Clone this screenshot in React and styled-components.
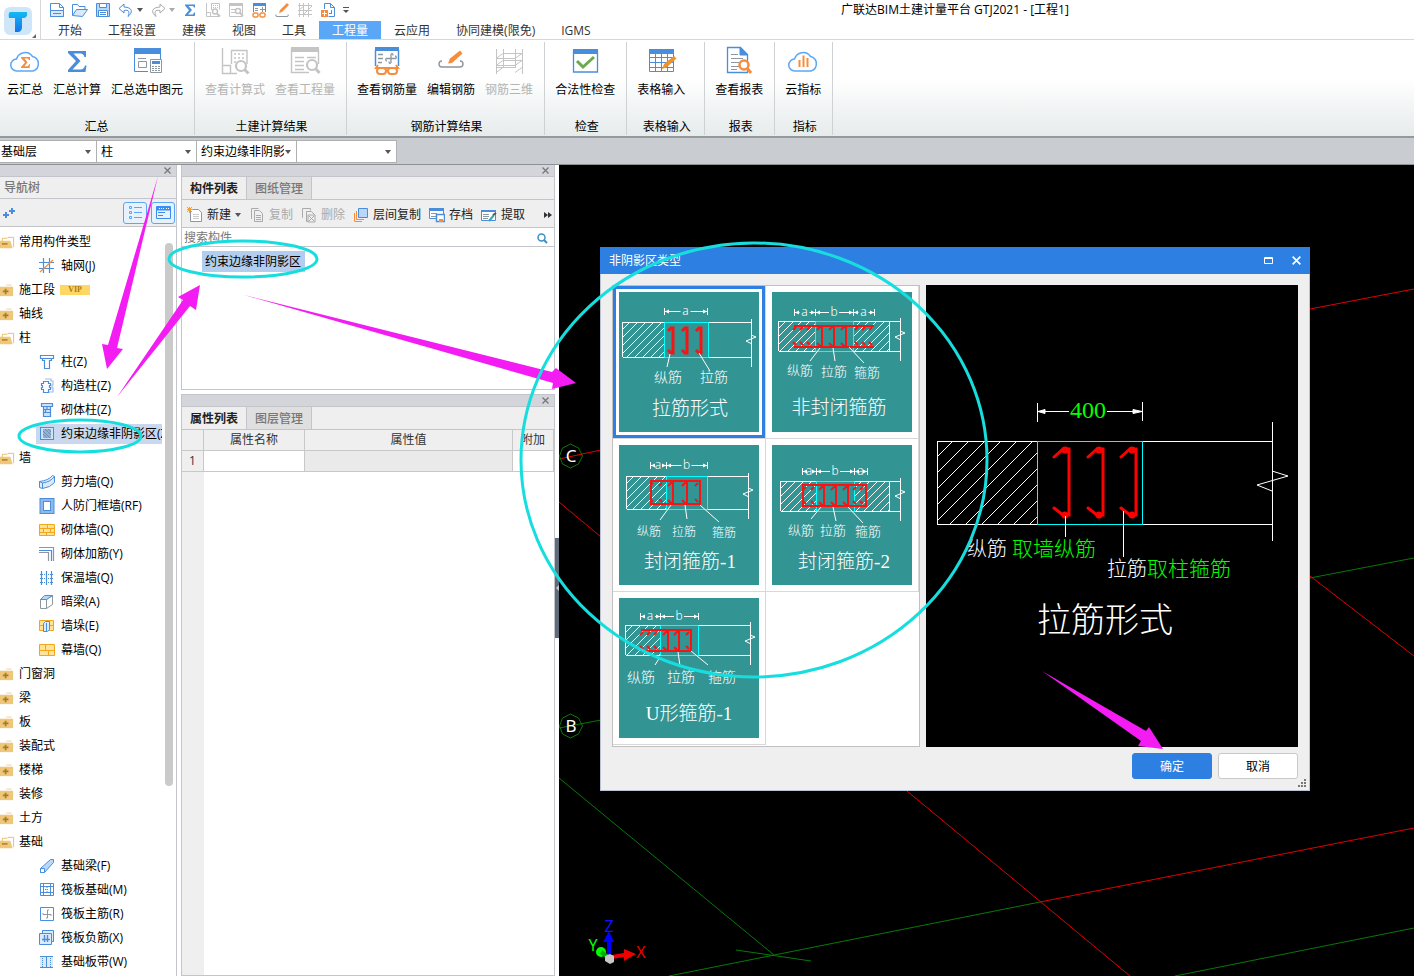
import { useState } from 'react';
import styled, { createGlobalStyle } from 'styled-components';

const GlobalStyle = createGlobalStyle`
  * {
    box-sizing: border-box;
  }
  body {
    margin: 0;
    font-family: "Open Sans", "Noto Sans CJK SC", sans-serif;
    font-size: 12px;
    line-height: 16px;
    color: #000;
    background: #fff;
  }
  button, input, select {
    font: inherit;
    color: inherit;
    margin: 0;
    padding: 0;
    border: none;
    background: none;
  }
  svg {
    display: block;
    flex: none;
  }
`

const Page = styled.div`
  position: relative;
  display: flex;
  flex-direction: column;
  height: 100vh;
  overflow: hidden;
`

/* header */
const Header = styled.header`
  display: flex;
  height: 40px;
  border-bottom: 1px solid #d5d8db;
`
const Logo = styled.button`
  display: flex;
  align-items: flex-end;
  width: 41px;
  border-right: 1px solid #d5d8db;
`
const HeaderMain = styled.div`
  flex: 1;
  display: flex;
  flex-direction: column;
`
const QuickBar = styled.div`
  display: flex;
  align-items: center;
  gap: 7px;
  height: 20px;
  padding-left: 8px;
`
const QuickButton = styled.button`
  display: flex;
  align-items: center;
  gap: 3px;
`
const Title = styled.h1`
  flex: 1;
  margin: 0;
  padding-left: 140px;
  font-size: 12px;
  font-weight: 400;
  text-align: center;
`
const Tabs = styled.nav`
  display: flex;
  margin-top: 1px;
  padding-left: 4px;
`
const Tab = styled.a`
  padding: 2px 13px 0;
  height: 18px;
  color: ${(p) => (p.$active ? '#fff' : '#333')};
  background: ${(p) => (p.$active ? '#5aa7f8' : 'transparent')};
  text-decoration: none;
  white-space: nowrap;
`

/* ribbon */
const Ribbon = styled.div`
  display: flex;
  height: 98px;
  padding: 2px 0 1px;
  background: linear-gradient(#fff 40%, #e6ebeb);
  border-bottom: 2px solid #96999c;
`
const Group = styled.section`
  display: flex;
  flex-direction: column;
  justify-content: space-between;
  min-width: ${(p) => p.$min || 0}px;
  padding: 4px 11px 0 ${(p) => (p.$first ? 7 : 10)}px;
  border-right: 1px solid #cfd2d4;
`
const GroupItems = styled.div`
  display: flex;
  gap: 10px;
`
const GroupLabel = styled.div`
  padding-left: 3px;
  text-align: center;
`
const Tool = styled.button`
  display: flex;
  flex-direction: column;
  align-items: center;
  gap: 4px;
  white-space: nowrap;
  color: ${(p) => (p.disabled ? '#b4b4b4' : '#000')};
`

/* combo bar */
const ComboBar = styled.div`
  display: flex;
  height: 27px;
  padding: 2px 0;
  background: #c9ccd1;
  border-bottom: 1px solid #8e9196;
`
const Combo = styled.label`
  position: relative;
  width: ${(p) => p.$width}px;
  height: 23px;
  background: #fff;
  border: solid #b0b0b0;
  border-width: 1px 1px 1px 0;
`
const ComboSelect = styled.select`
  appearance: none;
  width: 100%;
  height: 100%;
  padding: 0 12px 0 ${(p) => (p.$first ? 1 : 4)}px;
  outline: none;
`
const ComboCaret = styled.span`
  position: absolute;
  right: 5px;
  top: 9px;
  pointer-events: none;
`

const Workspace = styled.div`
  flex: 1;
  display: flex;
  min-height: 0;
`

/* docked panels */
const Strip = styled.div`
  display: flex;
  justify-content: flex-end;
  align-items: center;
  height: 12px;
  padding-right: 5px;
  background: #d3d5db;
  border-bottom: 1px solid #c3c5cb;
`
const NavPanel = styled.aside`
  display: flex;
  flex-direction: column;
  width: 177px;
  border-right: 1px solid #c3c5cb;
`
const PanelTitle = styled.h2`
  margin: 0;
  padding: 3px 4px 0;
  height: 22px;
  font-size: 12px;
  font-weight: 500;
  color: #777;
  background: #efefef;
  border-bottom: 1px solid #c3c5cb;
`
const NavTools = styled.div`
  display: flex;
  align-items: center;
  height: 28px;
  padding: 0 1px 0 3px;
  background: #efefef;
  border-bottom: 1px solid #c3c5cb;
`
const Spacer = styled.div`
  flex: 1;
`
const ViewButton = styled.button`
  display: flex;
  align-items: center;
  justify-content: center;
  width: 24px;
  height: 22px;
  margin-left: 4px;
  border: 1px solid #5aa7f8;
  border-radius: 3px;
  background: #e8f2fd;
`
const NavBody = styled.div`
  flex: 1;
  display: flex;
  min-height: 0;
`
const Tree = styled.ul`
  flex: 1;
  min-width: 0;
  margin: 0;
  padding: 3px 0 0;
  list-style: none;
  overflow: hidden;
`
const TreeRow = styled.li`
  display: flex;
  align-items: center;
  gap: ${(p) => (p.$leaf ? 6 : 4)}px;
  height: 20px;
  margin: 2px 0 4px ${(p) => (p.$leaf ? 36 : 0)}px;
  padding-left: ${(p) => (p.$leaf ? 3 : 0)}px;
  background: ${(p) => (p.$selected ? '#c9d8ee' : 'transparent')};
  white-space: nowrap;
  overflow: hidden;
`
const Vip = styled.span`
  width: 30px;
  height: 10px;
  margin-left: 1px;
  background: #ffd765;
  color: #b07a10;
  font: bold 8px/10px "Liberation Serif", serif;
  text-align: center;
`
const Rail = styled.div`
  display: flex;
  flex-direction: column;
  width: 14px;
  padding: 16px 3px 0;

  &::before {
    content: '';
    flex: 543;
    border-radius: 4px;
    background: #cacaca;
  }
  &::after {
    content: '';
    flex: 190;
  }
`
const MidColumn = styled.div`
  display: flex;
  flex-direction: column;
  gap: 4px;
  width: 382px;
  padding: 0 4px;
`
const Panel = styled.section`
  display: flex;
  flex-direction: column;
  flex: ${(p) => (p.$grow ? '1' : 'none')};
  min-height: ${(p) => (p.$grow ? 0 : 225)}px;
  border: 1px solid #c3c5cb;
  border-top-width: ${(p) => (p.$grow ? 1 : 0)}px;
`
const PanelTabs = styled.div`
  display: flex;
  height: 23px;
  background: #efefef;
  border-bottom: 1px solid #c3c5cb;
`
const PanelTab = styled.button`
  width: 65px;
  padding-top: 2px;
  border-right: 1px solid #c3c5cb;
  background: ${(p) => (p.$active ? '#efefef' : '#dfdfdf')};
  color: ${(p) => (p.$active ? '#222' : '#777')};
  font-weight: ${(p) => (p.$active ? 600 : 500)};
`
const ListTools = styled.div`
  display: flex;
  align-items: center;
  gap: 8px;
  height: 28px;
  padding: 2px 2px 0 5px;
  background: #efefef;
  border-bottom: 1px solid #c3c5cb;
`
const ListTool = styled.button`
  display: flex;
  align-items: center;
  gap: 4px;
  white-space: nowrap;
  color: ${(p) => (p.disabled ? '#aaa' : '#222')};
`
const Search = styled.label`
  display: flex;
  align-items: center;
  height: 19px;
  padding: 2px 6px 0 2px;
  border-bottom: 1px solid #c3c5cb;
`
const SearchInput = styled.input`
  flex: 1;
  outline: none;

  &::placeholder {
    color: #777;
    opacity: 1;
  }
`
const ListItem = styled.button`
  align-self: flex-start;
  height: 21px;
  margin: 4px 0 0 20px;
  padding: 0 4px 0 3px;
  background: #b3cdee;
`
const PropTable = styled.table`
  width: 100%;
  border-collapse: separate;
  border-spacing: 0;
  table-layout: fixed;
  color: #333;

  th, td {
    height: 21px;
    padding: 0;
    border: solid #c8c8c8;
    border-width: 0 1px 1px 0;
    font-weight: 400;
    text-align: center;
  }
  th {
    background: #efefef;
  }
`
const ValueCell = styled.td`
  background: #eaeaea;
`
const TableRest = styled.div`
  flex: 1;
  background: linear-gradient(90deg, #efefef 22px, #fff 22px);
`

/* model view */
const Viewport = styled.main`
  position: relative;
  flex: 1;
  background: #000;
  overflow: hidden;
`
const Splitter = styled.span`
  position: absolute;
  left: 555px;
  top: 538px;
  display: flex;
  align-items: center;
  justify-content: flex-end;
  width: 4px;
  height: 100px;
  background: #5f6b78;
`

/* dialog */
const Dialog = styled.div`
  position: absolute;
  left: 41px;
  top: 82px;
  width: 710px;
  background: #efefef;
  border: 1px solid #b9c3d3;
  border-top: none;
`
const DialogBar = styled.div`
  display: flex;
  align-items: center;
  height: 27px;
  margin: 0 -1px;
  padding: 0 9px;
  background: #2d80e2;
  color: #fff;
`
const WinButton = styled.button`
  margin-left: 19px;
`
const DialogBody = styled.div`
  display: flex;
  gap: 6px;
  padding: 11px 11px 0;
`
const Choices = styled.div`
  display: grid;
  grid-template-columns: repeat(2, 153px);
  grid-template-rows: repeat(3, 153px);
  border: 1px solid #c0c0c0;
  background: #fff;
`
const Choice = styled.button`
  display: flex;
  align-items: center;
  justify-content: center;
  border: solid #d8d8d8;
  border-width: 0 1px 1px 0;
  box-shadow: ${(p) => (p.$selected ? 'inset 0 0 0 3px #2d80e2' : 'none')};
`
const Preview = styled.div`
  flex: 1;
  background: #000;
`
const DialogFoot = styled.div`
  display: flex;
  justify-content: flex-end;
  gap: 6px;
  height: 43px;
  padding: 6px 11px 0;
`
const FootButton = styled.button`
  width: 80px;
  height: 26px;
  padding-top: 2px;
  border: 1px solid ${(p) => (p.$primary ? '#2d80e2' : '#c9c9c9')};
  border-radius: 3px;
  background: ${(p) => (p.$primary ? '#2d80e2' : '#fff')};
  color: ${(p) => (p.$primary ? '#fff' : '#000')};
`
const Grip = styled.span`
  position: absolute;
  right: 3px;
  bottom: 3px;
`
const Marks = styled.svg`
  position: absolute;
  left: 0;
  top: 0;
  pointer-events: none;
`
const DrawText = styled.text`
  font-family: ${(p) => (p.$sans ? '"Noto Sans"' : '"Liberation Serif"')}, "Noto Sans CJK SC", serif;
  font-size: ${(p) => p.$size}px;
  font-weight: 300;
  fill: ${(p) => p.$color || '#fff'};
  stroke: none;
  text-anchor: ${(p) => p.$anchor || 'middle'};
`

const B = '#4a8edb'
const O = '#f58d3d'
const G = '#8c979f'
const L = '#c4c4c4'

const Caret = ({ color = '#555' }) => (
  <svg width="6" height="4"><path d="M0 0h6L3 4z" fill={color} /></svg>
)
const Close = ({ color = '#777', size = 7 }) => (
  <svg width={size} height={size} viewBox="0 0 7 7" stroke={color} strokeWidth="1.300"><path d="M.5.5l6 6M6.5.5l-6 6" /></svg>
)

/* 16px icons */
const small = {
  new: <g stroke={B}><path d="M1.500 1.500h9l4 4v9h-13z" fill="#fff" /><path d="M10.500 1.500v4h4" fill="none" /><path d="M1.500 8.500h13v6h-13z" fill="#d9e9fb" /><path d="M4 11.500h8" /></g>,
  open: <g stroke={B} fill="#fff"><path d="M.5 13.500v-11h5l1.500 2h6v3" /><path d="M.5 13.500l4-6h11l-5 7z" fill="#d9e9fb" /></g>,
  save: <g stroke={B} fill="#b9d7fa"><path d="M1.500 1.500h13v13h-13z" /><path d="M4.500 1.500h7v4h-7zM3.500 8.500h9v6h-9z" fill="#fff" /><path d="M5 10.500h6M5 12.500h6" /></g>,
  undo: <path d="M6 2L1 6.500 6 11V8.500c5-1 6 1 4 6 5-4 5-9-4-9.500z" fill="#fff" stroke={B} />,
  redo: <path d="M10 2l5 4.500L10 11V8.500c-5-1-6 1-4 6-5-4-5-9 4-9.500z" fill="#fff" stroke="#aaa" />,
  sum: <path d="M3 2.500h10v3h-1L11 4H6.500L10 8l-4 4.500h5l1-2h1.200l-.4 3.500H3v-1L7 8.300 3 3.500z" fill={B} />,
  calc: <g stroke={L} fill="none"><path d="M1.500 1v13.500h13M1.500 10.500h4v4" /><path d="M6.500 8V1.500h8v6" /><path d="M8 3.500h5M8 5.500h5" strokeDasharray="1 1" /><circle cx="10" cy="9.500" r="2.500" strokeWidth="1.500" /><path d="M12 11.500l3 3" strokeWidth="2" /></g>,
  qty: <g stroke={L} fill="none"><path d="M1.500 2v12.500h13V2z" /><path d="M1 2.500h14" strokeWidth="3" /><path d="M3 7.500h4M3 10.500h4" /><circle cx="10" cy="9" r="2.500" strokeWidth="1.500" /><path d="M12 11l3 3" strokeWidth="2" /></g>,
  rebar: <g stroke={B} fill="none"><path d="M2.500 10V2.500h12V10" /><path d="M2 2.500h13" strokeWidth="3" /><path d="M4 6.500h3M4 8.500h3M9 7.500h5M11.500 5v5" stroke={G} /><g stroke={O} strokeWidth="1.500"><rect x="2" y="11" width="5" height="4" rx="1.500" /><rect x="9" y="11" width="5" height="4" rx="1.500" /></g></g>,
  edit: <g fill="none"><path d="M2 12.500q-1 2 1 2h10q2 0 1-2" stroke={G} /><path d="M5 11l1-3 7-7 2 2-7 7z" fill={O} /></g>,
  grid3: <path d="M2.500 1v14M6.500 1v14M11.500 1v14M1 3.500h14M1 8.500h14M1 12.500h14M2 8l5-4M7 12l8-8" stroke={L} fill="none" />,
  addpage: <g fill="none" stroke={B}><path d="M4.500 7V1.500h6l4 4v9h-6M10.500 1.500v4h4" /><rect x="1" y="8" width="7" height="7" fill={O} stroke="none" /><path d="M4.500 9v5M2 11.500h5" stroke="#fff" /><path d="M9 11.500h3M11.500 8v3" /></g>,
  axis: <g fill="none" stroke={B} strokeWidth="1.200"><path d="M4.500 0v15M10.500 0v15M0 4.500h15M0 10.500h15" /><path d="M1 14L14 2" stroke={O} /></g>,
  column: <g fill="#fff" stroke={B} strokeWidth="1.200"><path d="M1.500 1.500h13v3h-2v2h-2v8h-5v-8h-2v-2h-2z" /><path d="M4 4.500h8" /></g>,
  structcol: <g fill="#fff" stroke={B} strokeWidth="1.200"><path d="M6 1h6v2h2v4h-1v3h1v4H7" stroke="#9dc1ee" /><path d="M4.500 3.500h5v2h2v2h-1v2h1v2h-2v3h-5v-3h-2v-2h1v-2h-1v-2h2z" /></g>,
  brickcol: <g fill="#cfe1f8" stroke={B} strokeWidth="1.200"><path d="M2.500 1.500h11v3h-2v10h-7v-10h-2z" /><path d="M3 4.500h10M5 7.500h6M5 10.500h6M8 5v3M6.500 8v3" /></g>,
  edge: <g stroke={B}><rect x="1.500" y="1.500" width="13" height="12" fill="#cfe1f8" /><path d="M4 3h8v9H4z" fill="#8fb2d8" stroke="none" /><path d="M4 5l7 7M4 8l4 4M6 3l6 6M9 3l3 3" stroke="#708da8" /></g>,
  shear: <g fill="#dcebfb" stroke={B}><path d="M.5 7.500q9-1 13-6l2 1v6q-4 5-12 6l-3-1z" /><path d="M.5 7.500l3 1.500q8-1 12-6.500M3.500 9v5.500" fill="none" /></g>,
  door: <g fill="none" stroke={B}><rect x="1" y=".5" width="14" height="15" fill="#8db9f1" /><rect x="4.500" y="3.500" width="7" height="9" fill="#fff" /></g>,
  brick: <g stroke="#f2a71b" fill="#ffe39a"><path d="M.5 2.500h15v11H.5z" /><path d="M.5 6.500h15M.5 10.500h15M8.500 3v3M4.500 7v3M11.500 7v3M7.500 11v3" /></g>,
  brickbar: <g fill="none" stroke={G} strokeWidth="1.200"><path d="M0 1.500h14.500V15M0 6.500h9.500V15" /><path d="M0 4.500h12.500V15" stroke={B} /></g>,
  insul: <g fill="none" stroke={B} strokeWidth="1.200"><path d="M2.500 1v14M7.500 1v14M12.500 1v14" /><path d="M1 4.500h13M1 8.500h13M1 12.500h13" strokeDasharray="1 1" /></g>,
  beam: <g fill="#fff" stroke={G}><path d="M1.500 5.500h6v9h-6z" /><path d="M7.500 5.500l6-4v9l-6 4z" /><path d="M1.500 5.500l4-4h8l-6 4z" fill="#b9d7fa" stroke={B} /></g>,
  pier: <g stroke="#f2a71b" fill="#ffe39a"><path d="M.5 2.500h14v10H.5zM.5 7.500h14" /><path d="M4.500 5.500l2-2h4v8l-2 2h-4zM7.500 5v8" stroke={B} fill="#dcebfb" /></g>,
  curtain: <g stroke="#f2a71b" fill="#ffe39a"><path d="M.5 2.500h15v11H.5z" /><path d="M.5 8.500h15M6.500 3v5M9.500 9v5" /></g>,
  fbeam: <g stroke={B} fill="#b9d7fa"><path d="M1.500 10.500l10-9h3v3l-9 10h-4z" /><path d="M1.500 10.500h4v4h-4z" fill="#fff" /></g>,
  raft: <g stroke={B} fill="none"><path d="M1.500 1.500h13v12h-13z" /><path d="M4.500 1v13M11.500 1v13M1 4.500h14M1 10.500h14" /><path d="M6 7.500h4M8 5v5" strokeDasharray="1 1" /></g>,
  raftmain: <g stroke={B} fill="none"><path d="M1.500 1.500h13v13h-13z" /><path d="M4 8.500h8M8.500 4v8M4 8.500V7M12 8.500V10M8.500 4H10M8.500 12H7" stroke={G} /></g>,
  raftneg: <g stroke={B} fill="#dcebfb"><path d="M3.500 3V.500h11v11H13" /><path d="M.5 3.500h12v11H.5z" /><path d="M3 9.500h8M5.500 5v7M8.500 5v7" strokeWidth="1.400" /></g>,
  band: <g stroke={B} fill="#dcebfb"><path d="M1 2h13v12H1z" stroke="none" /><path d="M1 2.500h13M1 13.500h13M7.500 2v12" /><path d="M3.500 4v9M11.500 4v9" strokeDasharray="1 1" /></g>,
  folderOpen: <g><path d="M2.500 13V3.500h5l1-1h6V13" fill="#fff" stroke="#e9bd69" /><path d="M-2 6h13l2.500 8H-2z" fill="#efc778" /><path d="M2 9.500h6" stroke="#a87b29" strokeWidth="1.500" /></g>,
  folder: <g><path d="M6 3l1-1.500h5L13 3z" fill="#f6deb0" /><path d="M-2 4h16v10H-2z" fill="#efc778" /><path d="M3 9h6M6 6v6" stroke="#a87b29" strokeWidth="1.800" /></g>,
  create: <g fill="#fff" stroke={G}><path d="M3.500 2.500h8l3 3v9h-11z" /><path d="M6 7.500h6M6 9.500h6M6 11.500h6" stroke="#ccc" /><path d="M0 0l5 5M5 0L0 5M2.500 0v6M0 2.500h6" stroke="#f5a02d" /></g>,
  copy: <g fill="#efefef" stroke="#aaa"><path d="M2.500 12V1.500h7" /><path d="M5.500 3.500h5l3 3v8h-8zM7 8.500h5M7 10.500h5M7 12.500h5" /></g>,
  del: <g fill="#efefef" stroke="#aaa"><path d="M2 10.500h-.5v-9h8v2" /><path d="M5.500 4.500h5l3 3v7h-8z" /><path d="M7 8h7v7H7z" /><path d="M8 9l5 5M13 9l-5 5" /></g>,
  layers: <g fill="none" stroke={O}><path d="M1.500 6v8.500H9M3.500 4v8.500H11" /><path d="M5.500 1.500h9v9h-9z" fill="#b9d7fa" stroke={B} /></g>,
  archive: <g fill="#fff" stroke={B}><path d="M.5 1.500h14v10H.5z" /><path d="M0 2.500h15" strokeWidth="3" /><path d="M2 6.500h6M2 9.500h5" stroke={G} /><path d="M7.500 7.500h8v7h-8z" strokeWidth="1.500" /><path d="M10 12h4v3h-4z" fill={O} stroke="none" /></g>,
  extract: <g fill="#fff" stroke={B}><path d="M.5 3.500h14v10H.5z" /><path d="M0 4h15" strokeWidth="2" /><path d="M2 7.500h6M2 9.500h6M2 11.500h5" stroke={G} /><path d="M8 14l5-6" stroke="#39a6b8" strokeWidth="2" /><path d="M12 8l3-2" stroke="#555" strokeWidth="2" /></g>,
}

const Icon = ({ name, size = 16 }) => (
  <svg width={size} height={size} viewBox="0 0 16 16" aria-hidden="true">{small[name]}</svg>
)

/* 32px ribbon icons */
const cloud = <path d="M8 25a6 6 0 0 1-.5-12A9 9 0 0 1 23.500 10.500 7.500 7.500 0 0 1 24 25z" fill="#fff" stroke="#5aa7f8" strokeWidth="1.500" />
const big = {
  cloudSum: <g>{cloud}<path d="M12 11h9v3h-1l-1-1.500h-3.500l3 3.800-3 4H19l1-2h1l-.3 3.700H12v-1l4-4.500-4-4.500z" fill={O} /></g>,
  sum: <path d="M7 5h18v6h-1.500q-1-3.500-4-3.500H12.500l7 7.500-8 8.500h8q3.500 0 4.500-4h1.500l-1 6.500H7v-2l8-9L7 7z" fill={B} />,
  sumSel: <g fill="none" stroke={B}><path d="M3.500 4v21.500H17" /><path d="M29.500 4v9" /><path d="M3 2h27v6H3z" fill={B} stroke="none" /><path d="M7.500 15.500h8v6h-8zM7 12.500h8" stroke={G} /><path d="M19.500 13.500h11v13h-11z" fill="#fff" stroke={G} /><path d="M21 15h8v3h-8z" fill={B} stroke="none" /><path d="M21 20.500h8M21 22.500h8M21 24.500h8" stroke={G} strokeDasharray="2 1" /></g>,
  calc: <g stroke={L} fill="none" strokeWidth="1.400"><path d="M3.500 2v25.500H18M3.500 19.500h8v8" /><path d="M28 18V4.500H12.500V18" /><path d="M15 8h11M15 12h11M15 16h3" strokeDasharray="2 2" /><circle cx="22" cy="20" r="5" strokeWidth="2.200" fill="#fff" /><path d="M25.500 23.500l4 4" strokeWidth="3" /></g>,
  qty: <g stroke={L} fill="none" strokeWidth="1.400"><path d="M2.500 3v23.500H20M29.500 3v15" /><path d="M2 3.500h28" strokeWidth="5" /><path d="M6 11.500h9M18 11.500h9M6 15.500h9M6 19.500h9M6 23.500h9" /><circle cx="23" cy="19" r="5" strokeWidth="2.200" fill="#fff" /><path d="M26.500 22.500l4 4.500" strokeWidth="3" /></g>,
  rebar: <g fill="none" stroke={B}><path d="M4.500 4v16M27.500 4v16" strokeWidth="1.500" /><path d="M4 1h24v4H4z" fill={B} stroke="none" /><path d="M7 8.500h5M7 12.500h5M7 16.500h4M15 12.500h10M20 8v9M20 8q2-1 2 1.500M20 17q-2 1-2-1.500M15 12.500q-1 2 1 2.500M25 12.500q1-2-1-2.500" stroke={G} strokeWidth="1.300" /><g stroke={O} strokeWidth="2"><path d="M7 19l-2 3h22l-2-3" /><rect x="6" y="22" width="9" height="6" rx="3" fill="#fff" /><rect x="17" y="22" width="9" height="6" rx="3" fill="#fff" /></g></g>,
  edit: <g fill="none"><path d="M7 15q-3 0-3 3t3 3h18q3 0 3-3t-3-3" stroke={G} strokeWidth="1.400" /><path d="M13 17.500l2-5L25 4.500l2.500 3L17 17z" fill={O} /></g>,
  grid3: <path d="M3.500 3v25M10.500 3v19M22.500 3v19M29.500 3v25M10 7.500h20M10 14.500h20M3 21.500h20M3 12.500h20M3 19.500h20M3 12.500l7-5M22 12.500l7-5M3 19.500l7-5M22 19.500l7-5M3 26.500l7-5M22 26.500l7-5" stroke={L} fill="none" />,
  check: <g fill="#fff" stroke={B}><path d="M4.500 5v21h24V5z" strokeWidth="1.300" /><path d="M4 3h25v5H4z" fill={B} stroke="none" /><path d="M8 15l6 6L25 11" fill="none" stroke="#6aac4d" strokeWidth="3" /></g>,
  table: <g fill="#fff" stroke={B}><path d="M4.500 3.500h24v22h-24z" /><path d="M4 3h25v5H4z" fill={B} stroke="none" /><path d="M4 11.500h24M4 16.500h24M4 21.500h24M10.500 8v18M16.500 8v18M22.500 8v18" /><path d="M17 23l2-5 10-8 2.500 2.500-10 9z" fill="#ee9326" stroke="none" /></g>,
  report: <g fill="#fff" stroke={B}><path d="M4.500 1.500h13l7 7v18h-20z" strokeWidth="1.300" /><path d="M17 1v8h8z" fill={B} /><path d="M8 8.500h7M8 12.500h12M8 16.500h8M8 20.500h8M8 23.500h6" stroke={G} /><circle cx="21" cy="19" r="4.500" stroke={O} strokeWidth="2.500" /><path d="M24 22l4 5" stroke={O} strokeWidth="3" /></g>,
  cloudBars: <g>{cloud}<path d="M12.500 21v-7M16.500 21V9.500M20.500 21v-9" stroke={O} strokeWidth="2" /></g>,
}

const quick = ['new', 'open', 'save', 'undo', 'redo', 'sum', 'calc', 'qty', 'rebar', 'edit', 'grid3', 'addpage']
const quickNames = ['新建', '打开', '保存', '撤销', '恢复', '汇总计算', '查看计算式', '查看工程量', '查看钢筋量', '编辑钢筋', '钢筋三维', '更多']
const tabs = ['开始', '工程设置', '建模', '视图', '工具', '工程量', '云应用', '协同建模(限免)', 'IGMS']

const groups = [
  { label: '汇总', items: [['cloudSum', '云汇总'], ['sum', '汇总计算'], ['sumSel', '汇总选中图元']] },
  { label: '土建计算结果', items: [['calc', '查看计算式', true], ['qty', '查看工程量', true]] },
  { label: '钢筋计算结果', items: [['rebar', '查看钢筋量'], ['edit', '编辑钢筋'], ['grid3', '钢筋三维', true]] },
  { label: '检查', items: [['check', '合法性检查']] },
  { label: '表格输入', min: 78, items: [['table', '表格输入']] },
  { label: '报表', items: [['report', '查看报表']] },
  { label: '指标', items: [['cloudBars', '云指标']] },
]

const combos = [
  ['楼层', '基础层', 97],
  ['构件类型', '柱', 100],
  ['构件', '约束边缘非阴影区', 100],
  ['图层', '', 100],
]

const tree = [
  ['folderOpen', '常用构件类型'],
  ['axis', '轴网(J)', 1],
  ['folder', '施工段'],
  ['folder', '轴线'],
  ['folderOpen', '柱'],
  ['column', '柱(Z)', 1],
  ['structcol', '构造柱(Z)', 1],
  ['brickcol', '砌体柱(Z)', 1],
  ['edge', '约束边缘非阴影区(Z)', 1],
  ['folderOpen', '墙'],
  ['shear', '剪力墙(Q)', 1],
  ['door', '人防门框墙(RF)', 1],
  ['brick', '砌体墙(Q)', 1],
  ['brickbar', '砌体加筋(Y)', 1],
  ['insul', '保温墙(Q)', 1],
  ['beam', '暗梁(A)', 1],
  ['pier', '墙垛(E)', 1],
  ['curtain', '幕墙(Q)', 1],
  ['folder', '门窗洞'],
  ['folder', '梁'],
  ['folder', '板'],
  ['folder', '装配式'],
  ['folder', '楼梯'],
  ['folder', '装修'],
  ['folder', '土方'],
  ['folderOpen', '基础'],
  ['fbeam', '基础梁(F)', 1],
  ['raft', '筏板基础(M)', 1],
  ['raftmain', '筏板主筋(R)', 1],
  ['raftneg', '筏板负筋(X)', 1],
  ['band', '基础板带(W)', 1],
]

/* geometry of each section type, in thumbnail units */
const sections = [
  {
    title: '拉筋形式', tx: 71, ty: 123, dimY: 19, dims: [45, 88], names: ['a'],
    top: 30, bottom: 65, left: 3, right: 132, hatch: [[3, 45]], core: [45, 89],
    bars: [53, 67, 81], barTop: 35, barBottom: 61, loop: '', thick: 3,
    leaders: 'M51 62l-3 13M80 61l11 18', labels: [['纵筋', 49, 90], ['拉筋', 95, 90]], size: 14, breakX: 132, zig: 48,
  },
  {
    title: '非封闭箍筋', tx: 67, ty: 122, dimY: 20, dims: [22, 43, 81, 102], names: ['a', 'b', 'a'],
    top: 29, bottom: 59, left: 6, right: 117, hatch: [[6, 43], [81, 117]], core: [43, 81],
    bars: [49, 61, 73], barTop: 34, barBottom: 54, loop: 'M22 34h80M22 55h80', dots: [24, 31, 38, 86, 93, 100],
    leaders: 'M48 56l-10 13M61 56l2 13M77 55l15 16', labels: [['纵筋', 28, 83], ['拉筋', 62, 84], ['箍筋', 95, 85]], size: 13, breakX: 128, zig: 44,
  },
  {
    title: '封闭箍筋-1', tx: 71, ty: 123, dimY: 20, dims: [31, 47, 88], names: ['a', 'b'],
    top: 31, bottom: 64, left: 7, right: 129, hatch: [[7, 47]], core: [47, 88],
    bars: [53, 67], barTop: 37, barBottom: 58, loop: 'M32 36h49v23H32z', dots: [34, 43, 79],
    leaders: 'M52 60L41 75M66 60l2 14M81 60l19 17', labels: [['纵筋', 30, 91], ['拉筋', 65, 91], ['箍筋', 105, 92]], size: 12, breakX: 129, zig: 48,
  },
  {
    title: '封闭箍筋-2', tx: 72, ty: 123, dimY: 26, dims: [30, 44, 82, 95], names: ['a', 'b', 'a'],
    top: 36, bottom: 66, left: 8, right: 117, hatch: [[8, 44], [82, 117]], core: [44, 82],
    bars: [51, 63, 75], barTop: 41, barBottom: 60, loop: 'M31 40h63v21H31z', dots: [34, 42, 84, 91],
    leaders: 'M49 62L39 74M61 62l3 14M76 62l15 16', labels: [['纵筋', 29, 90], ['拉筋', 61, 90], ['箍筋', 96, 91]], size: 13, breakX: 128, zig: 50,
  },
  {
    title: 'U形箍筋-1', tx: 70, ty: 122, dimY: 18, dims: [21, 41, 79], names: ['a', 'b'],
    top: 27, bottom: 57, left: 6, right: 131, hatch: [[6, 41]], core: [41, 79],
    bars: [48, 59], barTop: 33, barBottom: 52, loop: 'M22 32h50v21H22', dots: [24, 31, 38, 70],
    leaders: 'M41 59l-5 8M59 54l2 14M72 53l17 14', labels: [['纵筋', 22, 84], ['拉筋', 62, 84], ['箍筋', 103, 84]], size: 14, breakX: 131, zig: 42,
  },
]

/* diagonal strokes clipped to a box */
function hatchPath(x0, y0, x1, y1, step) {
  const w = x1 - x0
  const h = y1 - y0
  let d = ''
  for (let c = step; c < w + h; c += step) {
    const ax = Math.min(c, w)
    const by = Math.min(c, h)
    d += `M${x0 + ax} ${y0 + c - ax}L${x0 + c - by} ${y0 + by}`
  }
  return d
}

function Thumb({ s }) {
  const h = s.bottom - s.top
  return (
    <svg width="140" height="140" viewBox="0 0 140 140" fill="none" stroke="#fff" strokeWidth="1">
      <rect width="140" height="140" fill="#339494" stroke="none" />
      <g shapeRendering="crispEdges">
        <path d={`M${s.left + .5} ${s.top + .5}H${s.breakX}M${s.left + .5} ${s.bottom + .5}H${s.breakX}M${s.left + .5} ${s.top}v${h}M${s.right + .5} ${s.top}v${h}`} />
        <path d={`M${s.breakX + .5} ${s.top - 3}V${s.bottom + 10}`} />
        {s.dims.map((x) => <path key={x} d={`M${x + .5} ${s.dimY - 3}v7`} />)}
        {s.hatch.map(([a, b]) => <path key={a} d={hatchPath(a, s.top, b, s.bottom, 8)} />)}
      </g>
      {s.names.map((n, i) => {
        const a = s.dims[i]
        const b = s.dims[i + 1]
        const mid = (a + b) / 2
        return (
          <g key={i}>
            <path d={`M${a} ${s.dimY + .5}H${mid - 5}M${mid + 5} ${s.dimY + .5}H${b}`} />
            <path d={`M${a + 1} ${s.dimY + .5}l4-2v4zM${b} ${s.dimY + .5}l-4-2v4z`} fill="#fff" stroke="none" />
            <DrawText $sans $size={12} x={mid} y={s.dimY + 4}>{n}</DrawText>
          </g>
        )
      })}
      <path d={`M${s.core[0] + .5} ${s.top + .5}H${s.core[1] + .5}V${s.bottom + .5}H${s.core[0] + .5}z`} stroke="#0ff" />
      <g stroke="#f81414" strokeWidth="2">
        <path d={s.loop} />
        {s.bars.map((x) => (
          <path key={x} strokeWidth={s.thick} d={`M${x - 4} ${s.barTop + 4}l3-3h2V${s.barBottom}h-2l-3-3`} />
        ))}
        {(s.dots || []).map((x) => <path key={x} d={`M${x} ${s.barTop + 1}l-3 3M${x} ${s.barBottom - 1}l-3-3`} />)}
      </g>
      <path d={s.leaders} />
      <path d={`M${s.breakX} ${s.zig - 5}l5 2-10 4 6 3`} />
      {s.labels.map(([t, x, y]) => <DrawText key={t} $size={s.size} x={x} y={y}>{t}</DrawText>)}
      <DrawText $size={19} x={s.tx} y={s.ty}>{s.title}</DrawText>
    </svg>
  )
}

function PreviewDrawing() {
  return (
    <svg width="100%" height="462" viewBox="0 0 372 462" preserveAspectRatio="xMinYMin" fill="none" stroke="#fff">
      <g shapeRendering="crispEdges">
        <path d={hatchPath(11, 156, 111, 239, 16)} />
        <path d="M111 156.500H11.500v83H111M216 156.500h130M216 239.500h130M346.500 137v119M111.500 118v19M216.500 117v19M111 126.500h32M181 126.500h35M139.500 231v21M197.500 226v46" />
        <path d="M111.500 156.500h105v83h-105z" stroke="#0ff" />
      </g>
      <path d="M112 126.500l7-2v4zM216 126.500l-9-2v4z" fill="#fff" />
      <path d="M346 186l16 5-31 9 15 6" />
      {[142, 176, 209].map((x) => (
        <g key={x} stroke="#f00" strokeWidth="3" strokeLinecap="round">
          <path d={`M${x - 14} 172l9-8h6v66h-6l-9-7`} />
          <circle cx={x - 3} cy="165" r="2" />
          <circle cx={x - 3} cy="230" r="2" />
        </g>
      ))}
      <path d="M139.500 231v21M197.500 226v46" />
      <DrawText $size={24} $color="#0f0" x="162" y="133">400</DrawText>
      <DrawText $size={20} $anchor="start" x="41" y="271">纵筋</DrawText>
      <DrawText $size={21} $anchor="start" $color="#0f0" x="86" y="271">取墙纵筋</DrawText>
      <DrawText $size={20} $anchor="start" x="181" y="291">拉筋</DrawText>
      <DrawText $size={21} $anchor="start" $color="#0f0" x="221" y="291">取柱箍筋</DrawText>
      <DrawText $size={34} x="179" y="347">拉筋形式</DrawText>
    </svg>
  )
}

function Scene() {
  return (
    <svg width="855" height="811" viewBox="559 165 855 811" fill="none">
      <g stroke="#e00000">
        <path d="M1310 309l104-20M1310 576l104 80M907 791l223 185M1040 902l374-74M559 459l42-9M559 502l42 35" />
      </g>
      <g stroke="#087808">
        <path d="M1310 578l104-20M1040 902L669 976M559 778l215 177M736 950l75 11M1175 976l239-48M559 728l42-8" />
        <path d="M559.500 456l3-8 8-4 8 4 4 8-4 8-8 4-8-4zM559.500 726l3-8 8-4 8 4 4 8-4 8-8 4-8-4z" />
      </g>
      <g fontFamily="Noto Sans, sans-serif" fontSize="17" fill="#fff" textAnchor="middle">
        <text x="571" y="462">C</text>
        <text x="571" y="732">B</text>
      </g>
      <path d="M607 958v-16h-4l6-11 5 11h-3v16z" fill="#00f" />
      <path d="M612 955l12-2v-4l12 5-12 7v-4l-12 2z" fill="#e00" />
      <circle cx="601" cy="952" r="5" fill="#0f0" />
      <path d="M601 952l7 5" stroke="#0a0" strokeWidth="4" />
      <path d="M605 956l5-2 4 2v6l-4 2-5-3z" fill="#c8c8c8" />
      <g fontFamily="Noto Sans, sans-serif" fontSize="16" textAnchor="middle">
        <text x="609" y="932" fill="#11f">Z</text>
        <text x="593" y="951" fill="#0f0">Y</text>
        <text x="641" y="958" fill="#e00">X</text>
      </g>
    </svg>
  )
}

function App() {
  const [section, setSection] = useState(0)
  const [keyword, setKeyword] = useState('')

  return (
    <Page>
      <GlobalStyle />
      <Header>
        <Logo aria-label="菜单">
          <svg width="40" height="39">
            <defs>
              <linearGradient id="logoFill" x2="0" y2="1">
                <stop offset="0" stopColor="#14b9f5" />
                <stop offset="1" stopColor="#1573e8" />
              </linearGradient>
            </defs>
            <rect x="4" y="7" width="28" height="28" rx="6" fill="#cfe6f8" />
            <path d="M10 12h17q1 6-4 6h-1v10q-1 4-4 4h-3V18h-6q-1-5 1-6z" fill="url(#logoFill)" />
            <path d="M36 34v4h-4z" fill="#666" />
          </svg>
        </Logo>
        <HeaderMain>
          <QuickBar>
            {quick.map((name, i) => (
              <QuickButton key={name} aria-label={quickNames[i]}>
                <Icon name={name} />
                {name === 'undo' && <Caret />}
                {name === 'redo' && <Caret color="#aaa" />}
              </QuickButton>
            ))}
            <QuickButton aria-label="自定义">
              <svg width="6" height="7"><path d="M0 .5h6" stroke="#555" /><path d="M0 3h6L3 6z" fill="#555" /></svg>
            </QuickButton>
            <Title>广联达BIM土建计量平台 GTJ2021 - [工程1]</Title>
          </QuickBar>
          <Tabs>
            {tabs.map((t) => <Tab key={t} href="#" $active={t === '工程量'}>{t}</Tab>)}
          </Tabs>
        </HeaderMain>
      </Header>

      <Ribbon>
        {groups.map((g, i) => (
          <Group key={g.label} $first={i === 0} $min={g.min}>
            <GroupItems>
              {g.items.map(([icon, label, off]) => (
                <Tool key={label} disabled={off}>
                  <svg width="32" height="32" viewBox="0 0 32 32">{big[icon]}</svg>
                  {label}
                </Tool>
              ))}
            </GroupItems>
            <GroupLabel>{g.label}</GroupLabel>
          </Group>
        ))}
      </Ribbon>

      <ComboBar>
        {combos.map(([name, value, width], i) => (
          <Combo key={name} $width={width}>
            <ComboSelect aria-label={name} $first={i === 0}>
              <option>{value}</option>
            </ComboSelect>
            <ComboCaret><Caret /></ComboCaret>
          </Combo>
        ))}
      </ComboBar>

      <Workspace>
        <NavPanel>
          <Strip><button aria-label="关闭"><Close /></button></Strip>
          <PanelTitle>导航树</PanelTitle>
          <NavTools>
            <button aria-label="添加">
              <svg width="13" height="12" stroke={B} strokeWidth="2"><path d="M0 8h6M3 5v6M6 4h6M9 1v6" /></svg>
            </button>
            <Spacer />
            <ViewButton aria-label="列表">
              <svg width="13" height="13" fill="none" stroke="#5aa7f8"><path d="M.5.5h2v2h-2zM.5 5.500h2v2h-2zM.5 10.500h2v2h-2zM5 1.500h8M5 6.500h8M5 11.500h8" /></svg>
            </ViewButton>
            <ViewButton aria-label="窗口">
              <svg width="15" height="13" fill="none" stroke="#3b8ef0"><path d="M.5.5h14v12H.5z" /><path d="M1 2.500h13" strokeWidth="4" /><path d="M3 2.500h5M10 2.500h3" stroke="#fff" strokeDasharray="1 1" /><path d="M2 6.500h7M2 9.500h5" /></svg>
            </ViewButton>
          </NavTools>
          <NavBody>
            <Tree>
              {tree.map(([icon, label, leaf]) => (
                <TreeRow key={label} $leaf={leaf} $selected={icon === 'edge'}>
                  <Icon name={icon} size={leaf ? 16 : 15} />
                  {label}
                  {label === '施工段' && <Vip>VIP</Vip>}
                </TreeRow>
              ))}
            </Tree>
            <Rail />
          </NavBody>
        </NavPanel>

        <MidColumn>
          <Panel>
            <Strip><button aria-label="关闭"><Close /></button></Strip>
            <PanelTabs>
              <PanelTab $active>构件列表</PanelTab>
              <PanelTab>图纸管理</PanelTab>
            </PanelTabs>
            <ListTools>
              <ListTool><Icon name="create" />新建 <Caret /></ListTool>
              <ListTool disabled><Icon name="copy" />复制</ListTool>
              <ListTool disabled><Icon name="del" />删除</ListTool>
              <ListTool><Icon name="layers" />层间复制</ListTool>
              <ListTool><Icon name="archive" />存档</ListTool>
              <ListTool><Icon name="extract" />提取</ListTool>
              <Spacer />
              <ListTool aria-label="更多">
                <svg width="8" height="6"><path d="M0 0l4 3-4 3zM4 0l4 3-4 3z" fill="#333" /></svg>
              </ListTool>
            </ListTools>
            <Search>
              <SearchInput
                aria-label="搜索构件"
                placeholder="搜索构件..."
                value={keyword}
                onChange={(e) => setKeyword(e.target.value)}
              />
              <svg width="11" height="11" fill="none" stroke="#3b8fc6"><circle cx="4.500" cy="4.500" r="3.500" strokeWidth="1.500" /><path d="M7 7l3 3" strokeWidth="2" /></svg>
            </Search>
            <ListItem>约束边缘非阴影区</ListItem>
          </Panel>

          <Panel $grow>
            <Strip><button aria-label="关闭"><Close /></button></Strip>
            <PanelTabs>
              <PanelTab $active>属性列表</PanelTab>
              <PanelTab>图层管理</PanelTab>
            </PanelTabs>
            <PropTable>
              <colgroup>
                <col width="22" />
                <col width="101" />
                <col />
                <col width="41" />
              </colgroup>
              <thead>
                <tr><th /><th>属性名称</th><th>属性值</th><th>附加</th></tr>
              </thead>
              <tbody>
                <tr><th>1</th><td /><ValueCell /><td /></tr>
              </tbody>
            </PropTable>
            <TableRest />
          </Panel>
        </MidColumn>

        <Viewport>
          <Scene />
          <Dialog role="dialog" aria-label="非阴影区类型">
            <DialogBar>
              非阴影区类型
              <Spacer />
              <WinButton aria-label="最大化">
                <svg width="9" height="7" fill="none" stroke="#fff"><path d="M.5.5h8v6h-8zM0 1.500h9" /></svg>
              </WinButton>
              <WinButton aria-label="关闭"><Close color="#fff" size={9} /></WinButton>
            </DialogBar>
            <DialogBody>
              <Choices>
                {sections.map((s, i) => (
                  <Choice key={s.title} $selected={i === section} onClick={() => setSection(i)}>
                    <Thumb s={s} />
                  </Choice>
                ))}
              </Choices>
              <Preview><PreviewDrawing /></Preview>
            </DialogBody>
            <DialogFoot>
              <FootButton $primary>确定</FootButton>
              <FootButton>取消</FootButton>
            </DialogFoot>
            <Grip>
              <svg width="8" height="8" fill="#777"><path d="M6 0h2v2H6zM3 3h2v2H3zM6 3h2v2H6zM0 6h2v2H0zM3 6h2v2H3zM6 6h2v2H6z" /></svg>
            </Grip>
          </Dialog>
        </Viewport>
      </Workspace>
      <Splitter>
        <svg width="3" height="6"><path d="M3 0v6L0 3z" fill="#c5cad0" /></svg>
      </Splitter>

      <Marks width="1414" height="976" aria-hidden="true">
        <g fill="#f31cf3">
          <path d="M158 176L108 345l-6-1 5 25 16-20-6-1z" />
          <path d="M117 397L183 300l-5-3 22-12-4 25-6-4z" />
          <path d="M244 295l308 77 4-4 20 15-24 6 1-6z" />
          <path d="M1042 671l104 60 3-4 14 22-25-3 3-5z" />
        </g>
        <g fill="none" stroke="#17dede" strokeWidth="3">
          <ellipse cx="80" cy="436" rx="61" ry="16" />
          <ellipse cx="243" cy="259" rx="74" ry="18" />
          <ellipse cx="754" cy="460" rx="233" ry="217" />
        </g>
      </Marks>
    </Page>
  )
}

export default App
